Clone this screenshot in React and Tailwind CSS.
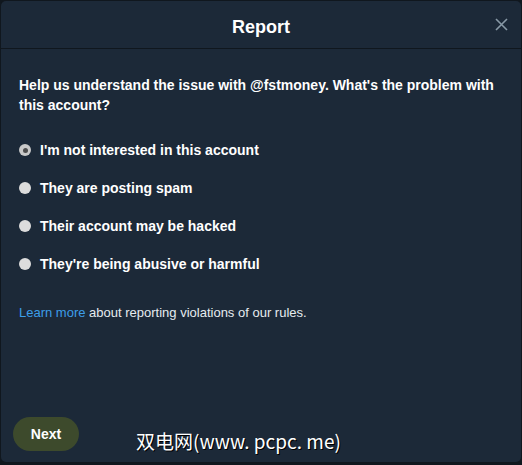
import React, { useState } from 'react';

const options = [
  "I'm not interested in this account",
  'They are posting spam',
  'Their account may be hacked',
  "They're being abusive or harmful",
];

const Radio = ({ checked }) =>
  checked ? (
    <span className="w-[12px] h-[12px] rounded-full bg-[#c9c9c9] flex items-center justify-center shrink-0">
      <span className="w-[5px] h-[5px] rounded-full bg-[#4d4d4d]" />
    </span>
  ) : (
    <span className="w-[12px] h-[12px] rounded-full bg-[#dcdcdc] shrink-0" />
  );

export default function App() {
  const [selected, setSelected] = useState(0);

  return (
    <div
      className="w-[522px] h-[465px] bg-[#10171e] relative"
      style={{ fontFamily: '"Liberation Sans", Arial, sans-serif' }}
    >
      <div className="absolute left-[1px] top-[1px] w-[520px] h-[461px] bg-[#1c2938] rounded-[5px] flex flex-col text-white">
        {/* header */}
        <div className="h-[48px] flex items-center justify-center relative border-b border-[#10171e]">
          <h2 className="text-[18px] font-bold mt-[5px]">Report</h2>
          <button className="absolute right-[13px] top-[17px] text-[#8899a6]">
            <svg width="13" height="13" viewBox="0 0 13 13" fill="none" stroke="currentColor" strokeWidth="1.6">
              <path d="M1 1L12 12M12 1L1 12" />
            </svg>
          </button>
        </div>

        {/* body */}
        <div className="flex-1 px-[18px] pt-[26px]">
          <p className="text-[14px] font-bold leading-[20px]">
            Help us understand the issue with @fstmoney. What's the problem with this account?
          </p>

          <div className="mt-[26px] flex flex-col gap-[20px]">
            {options.map((label, i) => (
              <label
                key={label}
                onClick={() => setSelected(i)}
                className="flex items-center gap-[9px] h-[18px] cursor-pointer"
              >
                <Radio checked={selected === i} />
                <span className="text-[14px] font-bold">{label}</span>
              </label>
            ))}
          </div>

          <p className="mt-[30px] text-[13px] text-[#e6ecf0]">
            <a className="text-[#3d9ee8]">Learn more</a> about reporting violations of our rules.
          </p>
        </div>

        {/* footer */}
        <div className="px-[12px] pb-[11px]">
          <button className="w-[66px] h-[34px] rounded-full bg-[#3d4a2c] text-[14px] font-bold text-white">
            Next
          </button>
        </div>
      </div>

      {/* watermark */}
      <div
        className="absolute left-[136px] top-[427px] text-[19px] text-white"
        style={{ fontFamily: '"Noto Sans CJK SC", sans-serif', textShadow: '1px 1px 0 #000' }}
      >
        双电网(www. pcpc. me)
      </div>
    </div>
  );
}
